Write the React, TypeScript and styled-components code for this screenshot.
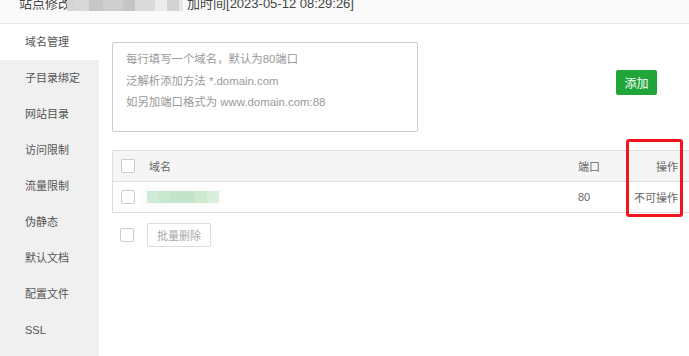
import React from "react";
import styled, { createGlobalStyle } from "styled-components";

const Global = createGlobalStyle`
  html, body { margin: 0; padding: 0; background: #fff; }
  body {
    width: 689px; height: 356px; overflow: hidden;
    font-family: "Liberation Sans", "Noto Sans CJK SC", sans-serif;
    color: #555;
  }
`;

const Page = styled.div`
  position: relative;
  width: 689px;
  height: 356px;
  overflow: hidden;
  display: flex;
  flex-direction: column;
`;

const TitleBar = styled.div`
  height: 23px;
  flex: none;
  background: #fafafa;
  border-bottom: 1px solid #e8e8e8;
  padding-left: 19px;
  display: flex;
  align-items: flex-start;
  overflow: hidden;
`;

const TitleText = styled.div`
  margin-top: -3px;
  line-height: 14px;
  font-size: 13px;
  color: #444;
  display: flex;
  align-items: center;
  white-space: nowrap;
`;

const Blur = styled.span`
  display: inline-block;
  width: 116px;
  height: 16px;
  margin: -3px 4px 0 -4px;
  background: linear-gradient(
    90deg,
    #d4d4d4 0 8px,
    #d8d8d8 8px 22px,
    #c6c6c6 22px 36px,
    #cfcfcf 36px 56px,
    #c5c5c5 56px 68px,
    #dadada 68px 88px,
    #ececec 88px 100px,
    #d3d3d3 100px 112px,
    #e8e8e8 112px 116px
  );
`;

const Main = styled.div`
  flex: 1;
  display: flex;
  min-height: 0;
`;

const Sidebar = styled.nav`
  width: 99px;
  flex: none;
  background: #f0f0f0;
  display: flex;
  flex-direction: column;
`;

const NavItem = styled.div<{ $active?: boolean }>`
  height: 36px;
  line-height: 36px;
  padding-left: 25px;
  font-size: 11px;
  color: #555;
  background: ${(p) => (p.$active ? "#fff" : "transparent")};
`;

const Content = styled.div`
  flex: 1;
  padding: 18px 0 0 13px;
  display: flex;
  flex-direction: column;
  min-width: 0;
`;

const TopRow = styled.div`
  display: flex;
  align-items: flex-start;
`;

const DomainBox = styled.div`
  width: 306px;
  height: 90px;
  box-sizing: border-box;
  border: 1px solid #ccc;
  border-radius: 2px;
  padding: 6px 13px;
  font-size: 11.4px;
  line-height: 21.5px;
  color: #999;
`;

const AddButton = styled.button`
  margin: 28px 0 0 198px;
  width: 41px;
  height: 25px;
  border: none;
  border-radius: 2px;
  background: #20a53a;
  color: #fff;
  font-family: inherit;
  font-size: 12px;
  padding: 0;
`;

const Table = styled.div`
  margin-top: 18px;
  width: 580px;
  flex: none;
  border-top: 1px solid #ddd;
  border-left: 1px solid #ddd;
`;

const Row = styled.div<{ $head?: boolean }>`
  display: grid;
  grid-template-columns: 36px 429px 54px 60px;
  height: 30px;
  align-items: center;
  border-bottom: 1px solid #ddd;
  background: ${(p) => (p.$head ? "#f5f5f5" : "#fff")};
  font-size: 11px;
  color: #666;
`;

const Cell = styled.div<{ $right?: boolean }>`
  text-align: ${(p) => (p.$right ? "right" : "left")};
  padding-right: ${(p) => (p.$right ? "14px" : "0")};
  white-space: nowrap;
`;

const CheckCell = styled.div`
  padding-left: 8px;
  display: flex;
  align-items: center;
`;

const Check = styled.span`
  display: inline-block;
  width: 14px;
  height: 14px;
  box-sizing: border-box;
  border: 1px solid #ccc;
  border-radius: 2px;
  background: #fff;
`;

const GreenBlur = styled.span`
  display: inline-block;
  margin-left: -2px;
  width: 72px;
  height: 12px;
  margin-top: 1px;
  background: linear-gradient(
    90deg,
    #cfead5 0 12px,
    #c8e7cf 12px 24px,
    #c3e4ca 24px 48px,
    #cfeace 48px 60px,
    #d8efdc 60px 72px
  );
  box-shadow: 0 0 6px 4px #fafafa;
`;

const Footer = styled.div`
  margin-top: 10px;
  display: flex;
  align-items: center;
  gap: 13px;
  padding-left: 8px;
`;

const BatchButton = styled.button`
  width: 64px;
  height: 24px;
  box-sizing: border-box;
  border: 1px solid #ddd;
  border-radius: 2px;
  background: #fff;
  color: #aaa;
  font-family: inherit;
  font-size: 11px;
  padding: 0;
`;

const Highlight = styled.div`
  position: absolute;
  left: 626px;
  top: 139px;
  width: 57px;
  height: 78px;
  box-sizing: border-box;
  border: 3px solid #f4141b;
  border-radius: 3px;
  pointer-events: none;
`;

const navItems = [
  "域名管理",
  "子目录绑定",
  "网站目录",
  "访问限制",
  "流量限制",
  "伪静态",
  "默认文档",
  "配置文件",
  "SSL",
];

export default function App() {
  return (
    <Page>
      <Global />
      <TitleBar>
        <TitleText>
          站点修改
          <Blur />
          加时间[2023-05-12 08:29:26]
        </TitleText>
      </TitleBar>
      <Main>
        <Sidebar>
          {navItems.map((n, i) => (
            <NavItem key={n} $active={i === 0}>
              {n}
            </NavItem>
          ))}
        </Sidebar>
        <Content>
          <TopRow>
            <DomainBox>
              每行填写一个域名，默认为80端口
              <br />
              泛解析添加方法 *.domain.com
              <br />
              如另加端口格式为 www.domain.com:88
            </DomainBox>
            <AddButton>添加</AddButton>
          </TopRow>
          <Table>
            <Row $head>
              <CheckCell>
                <Check />
              </CheckCell>
              <Cell>域名</Cell>
              <Cell>端口</Cell>
              <Cell $right>操作</Cell>
            </Row>
            <Row>
              <CheckCell>
                <Check />
              </CheckCell>
              <Cell>
                <GreenBlur />
              </Cell>
              <Cell>80</Cell>
              <Cell $right>不可操作</Cell>
            </Row>
          </Table>
          <Footer>
            <Check />
            <BatchButton>批量删除</BatchButton>
          </Footer>
        </Content>
      </Main>
      <Highlight />
    </Page>
  );
}
